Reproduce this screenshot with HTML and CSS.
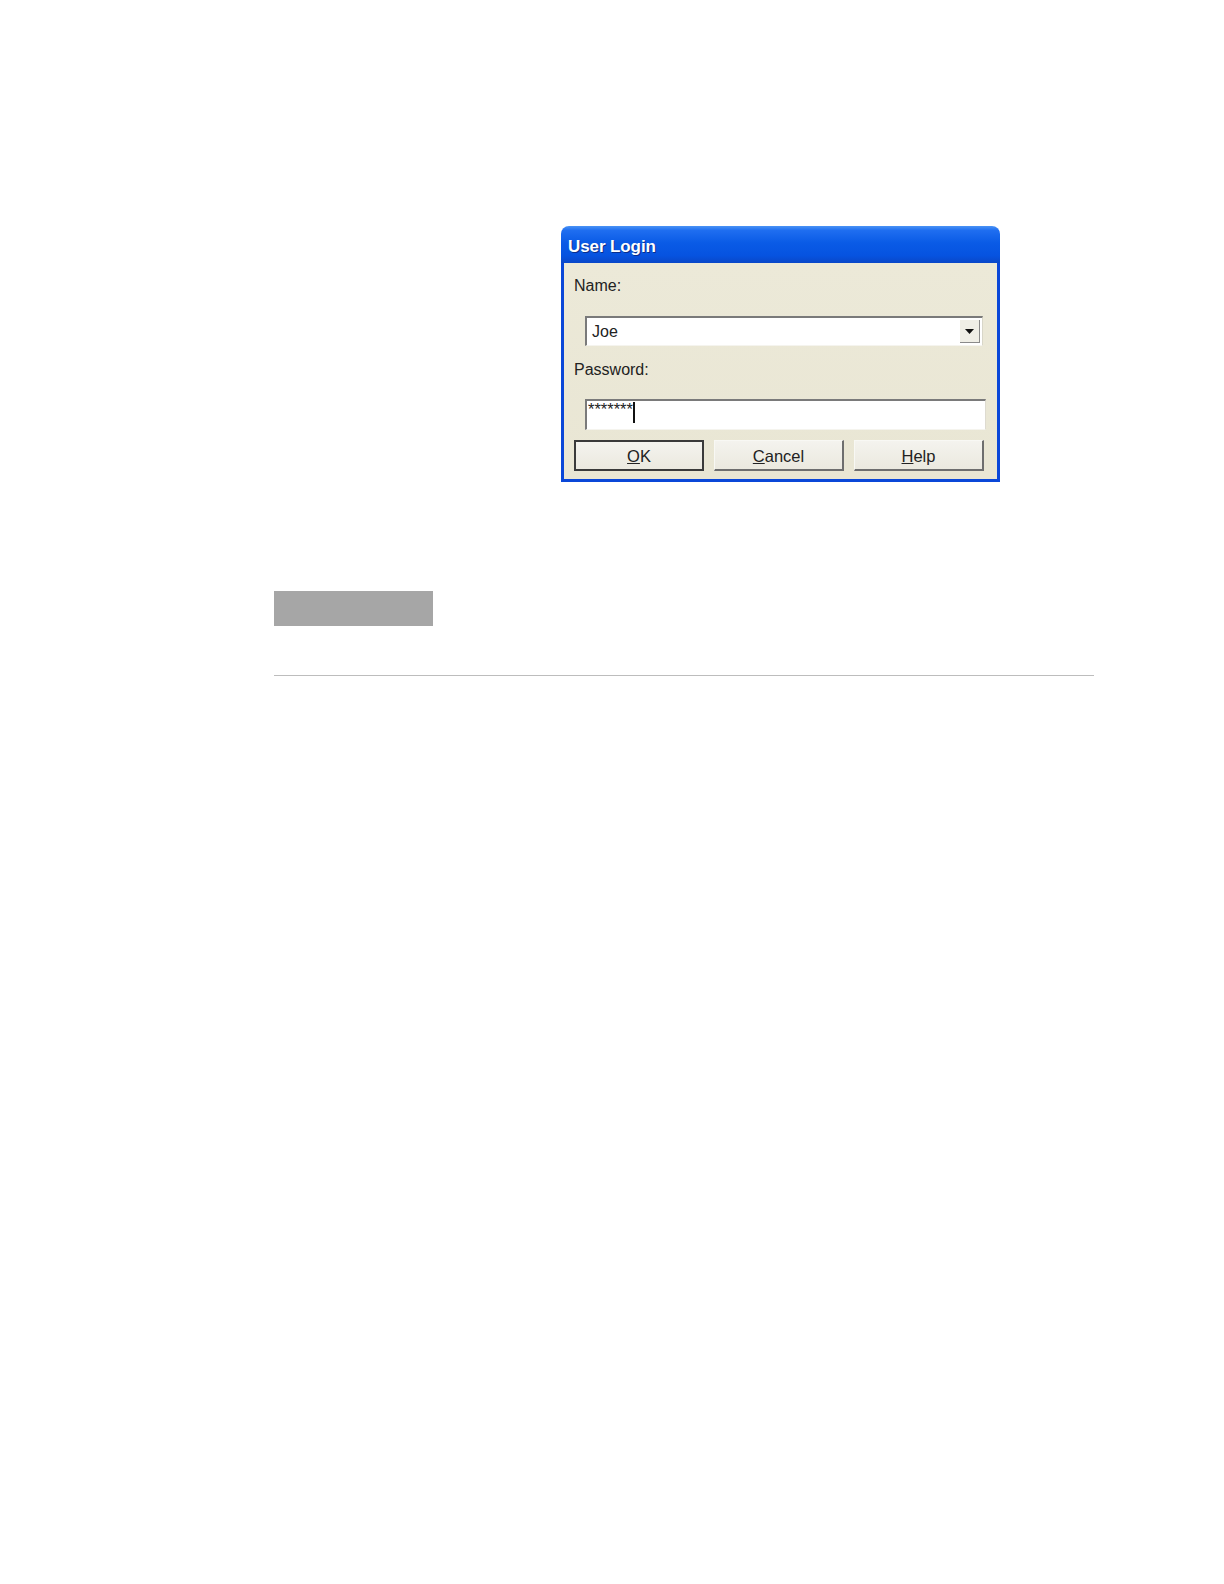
FILE: index.html
```html
<!DOCTYPE html>
<html>
<head>
<meta charset="utf-8">
<link rel="stylesheet" href="styles.css">
</head>
<body>
<div class="page">
  <div class="dialog">
    <div class="titlebar">User Login</div>
    <div class="dbody">
      <div class="label">Name:</div>
      <div class="combo">
        <span class="combo-text">Joe</span>
        <span class="combo-btn"><svg width="9" height="5" viewBox="0 0 9 5"><path d="M0 0H9L4.5 5Z" fill="#111"/></svg></span>
      </div>
      <div class="label label2">Password:</div>
      <div class="pwd"><span class="stars">*******</span><span class="caret"></span></div>
      <div class="buttons">
        <div class="btn btn-default"><span class="u">O</span>K</div>
        <div class="btn"><span class="u">C</span>ancel</div>
        <div class="btn"><span class="u">H</span>elp</div>
      </div>
    </div>
  </div>
  <div class="section">
    <div class="graybox"></div>
    <div class="rule"></div>
  </div>
</div>
</body>
</html>
```
FILE: styles.css
```css
html, body {
  margin: 0;
  padding: 0;
  background: #fff;
}
.page {
  padding-top: 226px;
  font-family: "Liberation Sans", Arial, sans-serif;
}
.dialog {
  margin-left: 561px;
  width: 439px;
  display: flex;
  flex-direction: column;
}
.titlebar {
  height: 37px;
  box-sizing: border-box;
  border-radius: 8px 8px 0 0;
  background: linear-gradient(to bottom, #4a93f5 0%, #1f6ef0 12%, #0a5be6 45%, #0653e0 80%, #0a47c8 100%);
  color: #fff;
  font-weight: bold;
  font-size: 17px;
  line-height: 41px;
  padding-left: 7px;
  letter-spacing: -0.1px;
  text-shadow: 1px 1px 0 #0a2e8a;
}
.dbody {
  background: linear-gradient(to bottom, #ece9d8, #e9e6d4);
  border: 3px solid #0a47d8;
  border-top: none;
  padding: 10px 0 8px 0;
  display: flex;
  flex-direction: column;
}
.label {
  height: 22px;
  line-height: 26px;
  font-size: 16px;
  color: #222;
  padding-left: 10px;
}
.label2 {
  margin-top: 11px;
}
.combo {
  margin-top: 21px;
  margin-left: 21px;
  width: 398px;
  height: 30px;
  box-sizing: border-box;
  background: #fff;
  border-top: 2px solid #7a7a7a;
  border-left: 2px solid #7a7a7a;
  border-right: 1px solid #d8d6c8;
  border-bottom: 1px solid #f5f4ee;
  display: flex;
  align-items: center;
  justify-content: space-between;
}
.combo-text {
  font-size: 16px;
  color: #222;
  padding-left: 5px;
}
.combo-btn {
  width: 19px;
  height: 22px;
  margin-right: 2px;
  background: #efeee6;
  border-right: 1px solid #8a8a8a;
  border-bottom: 1px solid #8a8a8a;
  display: flex;
  align-items: center;
  justify-content: center;
}
.pwd {
  margin-top: 20px;
  margin-left: 21px;
  width: 401px;
  height: 31px;
  box-sizing: border-box;
  background: #fff;
  border-top: 2px solid #7a7a7a;
  border-left: 2px solid #7a7a7a;
  border-right: 1px solid #dedbd0;
  border-bottom: 1px solid #f5f4ee;
  display: flex;
  align-items: flex-start;
}
.stars {
  font-size: 16.5px;
  line-height: 16px;
  color: #222;
  padding-left: 1px;
}
.caret {
  width: 2px;
  height: 21px;
  background: #111;
  margin-top: 1px;
  margin-left: 0;
}
.buttons {
  margin-top: 10px;
  margin-left: 10px;
  display: flex;
  gap: 10px;
}
.btn {
  width: 130px;
  height: 31px;
  box-sizing: border-box;
  padding-top: 2px;
  background: linear-gradient(to bottom, #f4f3ee, #ebe9df);
  border-top: 1px solid #f8f8f4;
  border-left: 1px solid #f8f8f4;
  border-right: 2px solid #6e6e6e;
  border-bottom: 2px solid #6e6e6e;
  font-size: 16.5px;
  color: #222;
  display: flex;
  align-items: center;
  justify-content: center;
}
.btn-default {
  border: 2px solid #3a3a3a;
}
.u {
  text-decoration: underline;
}
.section {
  margin-top: 109px;
  margin-left: 274px;
  width: 820px;
  display: flex;
  flex-direction: column;
}
.graybox {
  width: 159px;
  height: 35px;
  background: #a6a6a6;
}
.rule {
  margin-top: 49px;
  height: 1px;
  background: #bdbdbd;
}
```
